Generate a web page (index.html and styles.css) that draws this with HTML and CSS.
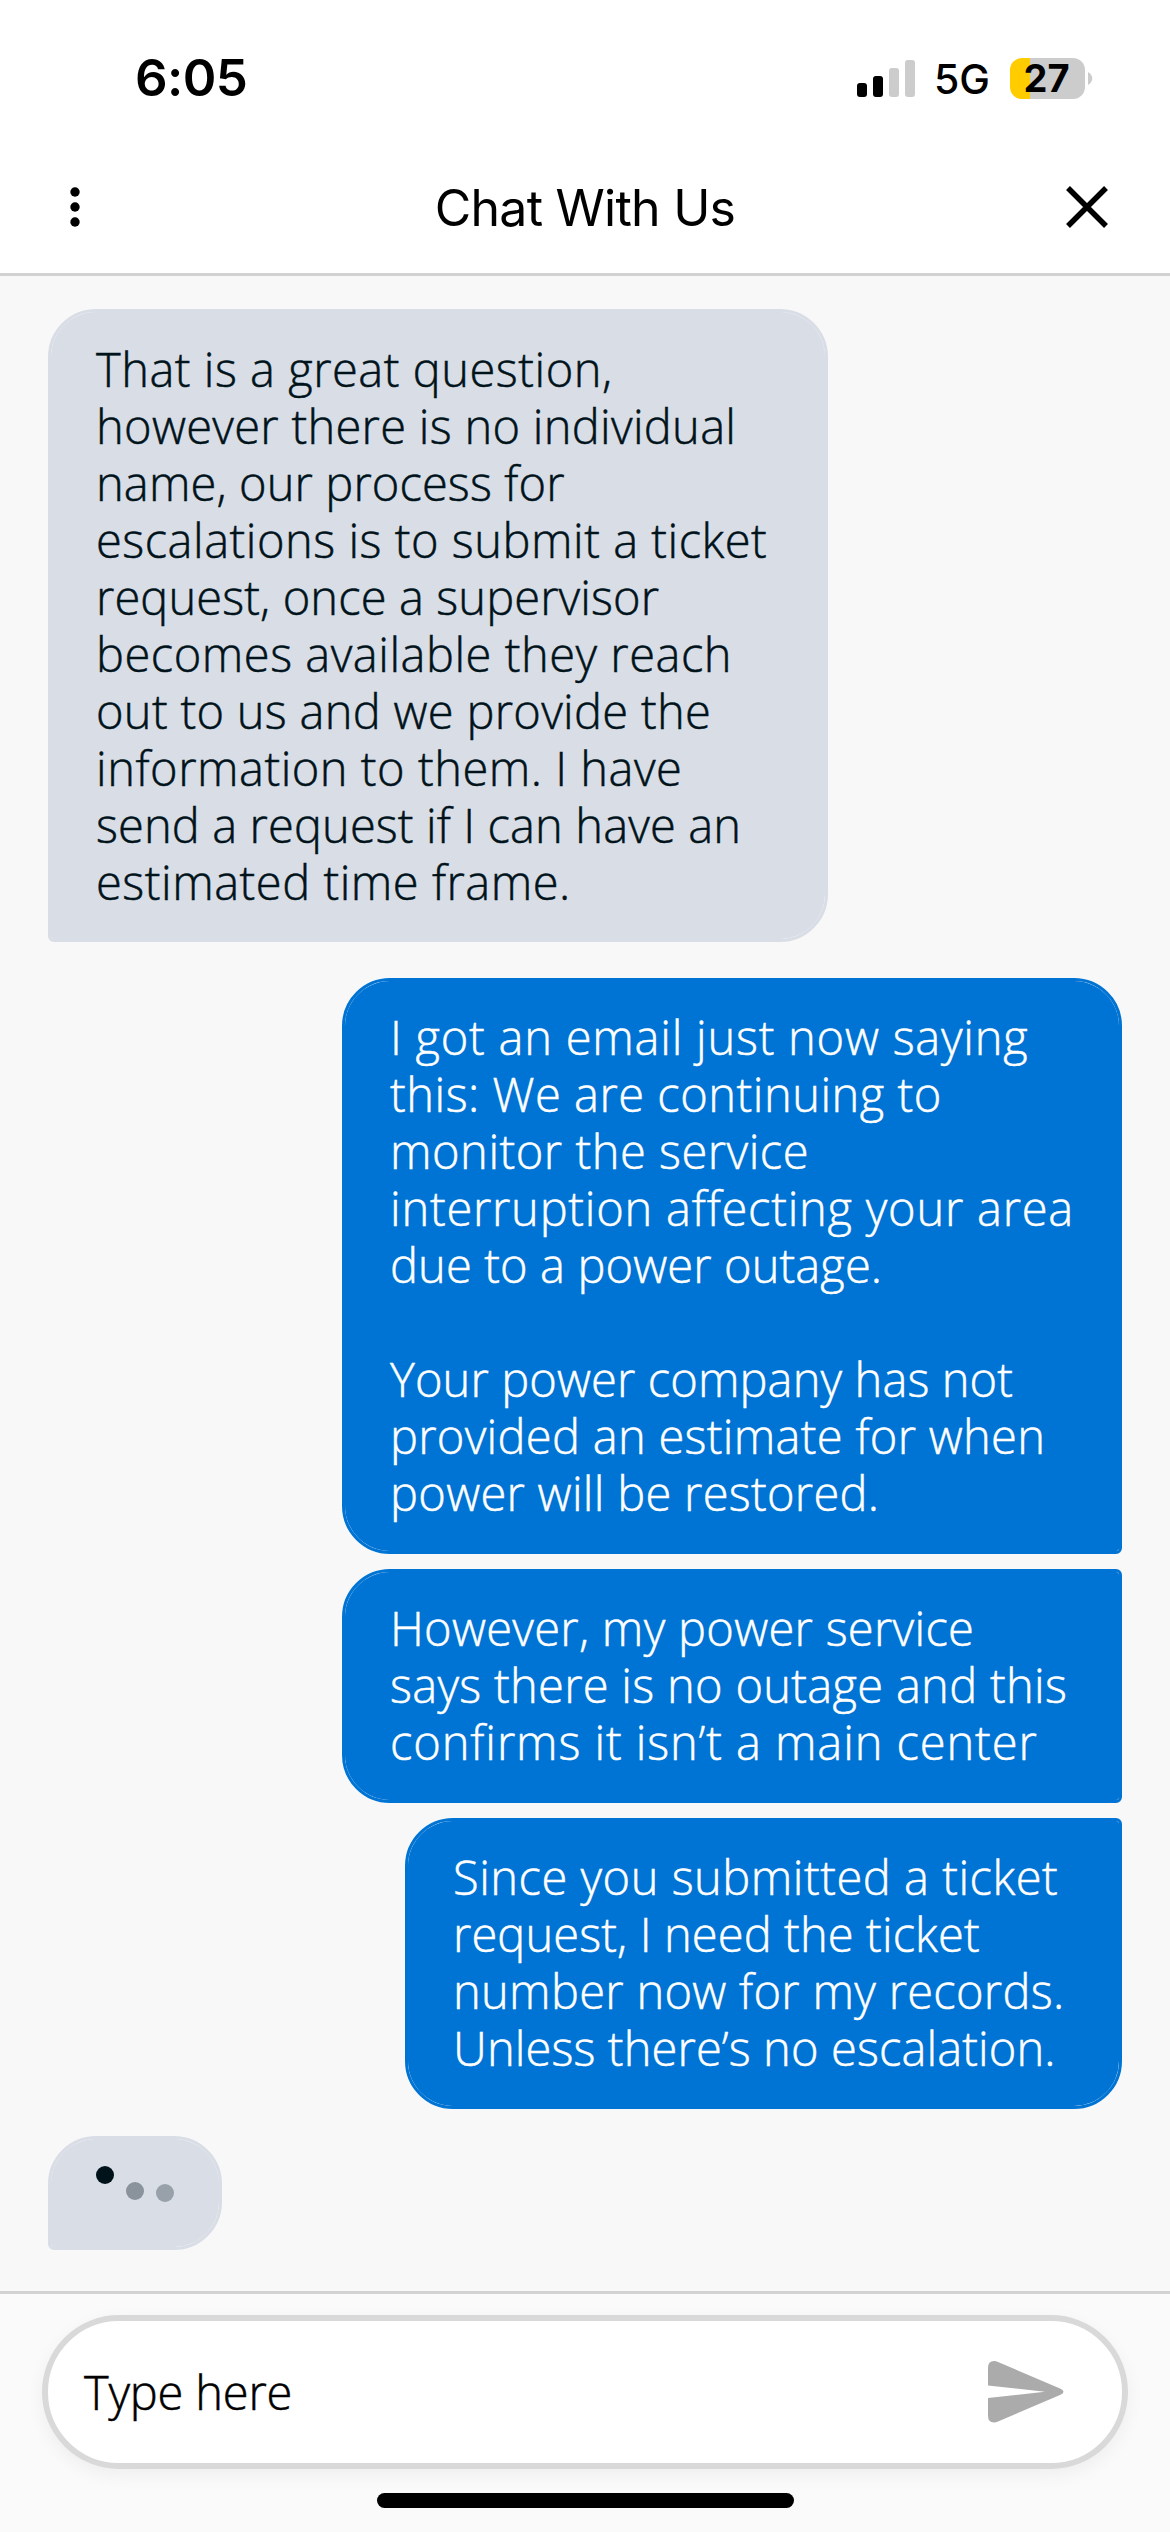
FILE: index.html
```html
<!DOCTYPE html>
<html lang="en">
<head>
<meta charset="utf-8">
<title>Chat With Us</title>
<link rel="stylesheet" href="styles.css">
</head>
<body>
<div class="screen">
  <div class="status">
    <span class="time">6:05</span>
    <div class="indicators">
      <svg class="signal" width="58" height="37" viewBox="0 0 58 37">
        <rect x="0" y="23" width="10" height="14" rx="3"/>
        <rect x="16" y="16" width="10" height="21" rx="3"/>
        <rect class="off" x="32" y="8" width="10" height="29" rx="3"/>
        <rect class="off" x="48" y="0" width="10" height="37" rx="3"/>
      </svg>
      <span class="network">5G</span>
      <div class="battery">27</div>
      <svg class="nub" width="5" height="13" viewBox="0 0 5 13"><path d="M0 0C2.4 1.2 4.3 3.7 4.3 6.500S2.400 11.800 0 13Z"/></svg>
    </div>
  </div>

  <header class="header">
    <svg class="menu" width="10" height="40" viewBox="0 0 10 40"><circle cx="5" cy="5" r="4.700"/><circle cx="5" cy="20" r="4.700"/><circle cx="5" cy="35" r="4.700"/></svg>
    <h1 class="title">Chat With Us</h1>
    <svg class="close" width="42" height="42" viewBox="0 0 42 42"><path d="M2 2L40 40M40 2L2 40"/></svg>
  </header>

  <main class="chat">
    <div class="bubble agent">
      <span class="line wide">That is a great question,</span>
      <span class="line loose">however there is no individual</span>
      <span class="line">name, our process for</span>
      <span class="line wide">escalations is to submit a ticket</span>
      <span class="line">request, once a supervisor</span>
      <span class="line wide">becomes available they reach</span>
      <span class="line loose">out to us and we provide the</span>
      <span class="line wide">information to them. I have</span>
      <span class="line">send a request if I can have an</span>
      <span class="line wide">estimated time frame.</span>
    </div>

    <div class="bubble user first">
      <span class="line wider">I got an email just now saying</span>
      <span class="line wide">this: We are continuing to</span>
      <span class="line wide">monitor the service</span>
      <span class="line wider">interruption affecting your area</span>
      <span class="line">due to a power outage.</span>
      <span class="line">&nbsp;</span>
      <span class="line">Your power company has not</span>
      <span class="line loose">provided an estimate for when</span>
      <span class="line loose">power will be restored.</span>
    </div>

    <div class="bubble user middle">
      <span class="line loose">However, my power service</span>
      <span class="line loose">says there is no outage and this</span>
      <span class="line widest">confirms it isn’t a main center</span>
    </div>

    <div class="bubble user last">
      <span class="line wide">Since you submitted a ticket</span>
      <span class="line">request, I need the ticket</span>
      <span class="line loose">number now for my records.</span>
      <span class="line">Unless there’s no escalation.</span>
    </div>

    <div class="bubble agent typing">
      <i class="dot dot-a"></i><i class="dot dot-b"></i><i class="dot dot-c"></i>
    </div>
  </main>

  <footer class="composer">
    <div class="field">
      <span class="placeholder">Type here</span>
      <svg class="send" width="76" height="62" viewBox="0 0 76 62"><path d="M0 7Q0 0 6 0Q8 0 10 1L72 27.500Q75.500 29 75.500 30.700Q75.500 32.500 72 34L10 60.500Q8 61.500 6 61.500Q0 61.500 0 54.500V37L57 30.700L0 24.500Z"/></svg>
    </div>
    <div class="home"></div>
  </footer>
</div>
</body>
</html>
```
FILE: styles.css
```css
* { box-sizing: border-box; }

body {
  margin: 0;
  background: #f8f8f8;
  color: #000;
  font-family: "Open Sans", "Noto Sans", sans-serif;
}

.screen {
  display: flex;
  flex-direction: column;
  width: 1170px;
  height: 2532px;
  overflow: hidden;
}

/* Status bar */
.status {
  display: flex;
  align-items: center;
  justify-content: space-between;
  height: 140px;
  padding: 16px 78px 0 135px;
  background: #fff;
  font-family: Inter, sans-serif;
}

.time {
  font-size: 51px;
  font-weight: 600;
  line-height: 60px;
  letter-spacing: -0.6px;
}

.indicators {
  display: flex;
  align-items: center;
}

.signal .off { fill: #ccc; }

.network {
  width: 95px;
  padding: 2px 0 0 19px;
  font-size: 41px;
  font-weight: 450;
  line-height: 50px;
}

.battery {
  width: 75px;
  height: 41px;
  padding-right: 2px;
  border-radius: 12px;
  background: linear-gradient(90deg, #ffcc00 20px, #ccc 20px);
  font-size: 38px;
  font-weight: 700;
  line-height: 41px;
  text-align: center;
}

.nub {
  margin-left: 3px;
  margin-right: -1px;
  fill: #ccc;
}

/* Chat header */
.header {
  display: flex;
  align-items: center;
  justify-content: space-between;
  height: 136px;
  padding: 1px 62px 0 70px;
  border-bottom: 3px solid #d2d2d2;
  background: #fff;
}

.title {
  margin: 0 0 0 24px;
  padding-top: 2px;
  font: 400 50px/60px Inter, sans-serif;
  letter-spacing: -0.75px;
}

.close {
  fill: none;
  stroke: #000;
  stroke-width: 5.5px;
}

/* Messages */
.chat {
  display: flex;
  flex: 1;
  flex-direction: column;
  padding: 33px 48px 0;
}

.bubble {
  padding: 28px 45px 29px;
  border: 3px solid;
  border-radius: 48px;
  background-clip: padding-box;
  font-size: 47px;
  font-weight: 300;
  line-height: 57px;
  -webkit-text-stroke: 0.5px currentColor;
}

.agent {
  align-self: flex-start;
  width: 780px;
  padding-top: 29px;
  padding-bottom: 28px;
  border-color: #d9dde6;
  border-bottom-left-radius: 6px;
  background-color: #d9dde6;
  color: #00131b;
}

.user {
  align-self: flex-end;
  width: 780px;
  border-color: #0074d4;
  background-color: #0074d4;
  color: #fff;
}

.first {
  margin-top: 36px;
  border-bottom-right-radius: 6px;
}

.middle {
  margin-top: 15px;
  border-top-right-radius: 6px;
  border-bottom-right-radius: 6px;
}

.last {
  width: 717px;
  margin-top: 15px;
  border-top-right-radius: 6px;
}

.line {
  display: block;
  letter-spacing: 0.12px;
  white-space: nowrap;
}

.loose { letter-spacing: 0.3px; }
.wide { letter-spacing: 0.52px; }
.wider { letter-spacing: 0.77px; }
.widest { letter-spacing: 0.9px; }

/* Typing indicator, caught mid-bounce */
.typing {
  display: flex;
  gap: 12px;
  width: 174px;
  height: 114px;
  margin-top: 27px;
  padding-top: 27px;
}

.dot {
  width: 18px;
  height: 18px;
  border-radius: 50%;
}

.dot-a { background: #00131b; }
.dot-b { margin-top: 16px; background: #8a929c; }
.dot-c { margin-top: 18px; background: #98a0aa; }

/* Composer */
.composer {
  display: flex;
  flex-direction: column;
  align-items: center;
  height: 241px;
  padding-top: 21px;
  border-top: 3px solid #d2d2d2;
  background: #fafafa;
}

.field {
  display: flex;
  align-items: center;
  justify-content: space-between;
  width: 1086px;
  height: 154px;
  padding: 0 58px 0 36px;
  border: 6px solid #d9d9d9;
  border-radius: 77px;
  background: #fff;
  box-shadow: 0 6px 18px rgba(0, 0, 30, 0.05);
}

.placeholder {
  font-size: 47px;
  font-weight: 300;
  line-height: 57px;
  letter-spacing: -0.2px;
  -webkit-text-stroke: 0.5px currentColor;
}

.send { fill: #ababab; }

.home {
  width: 417px;
  height: 15px;
  margin-top: 24px;
  border-radius: 8px;
  background: #000;
}
```
